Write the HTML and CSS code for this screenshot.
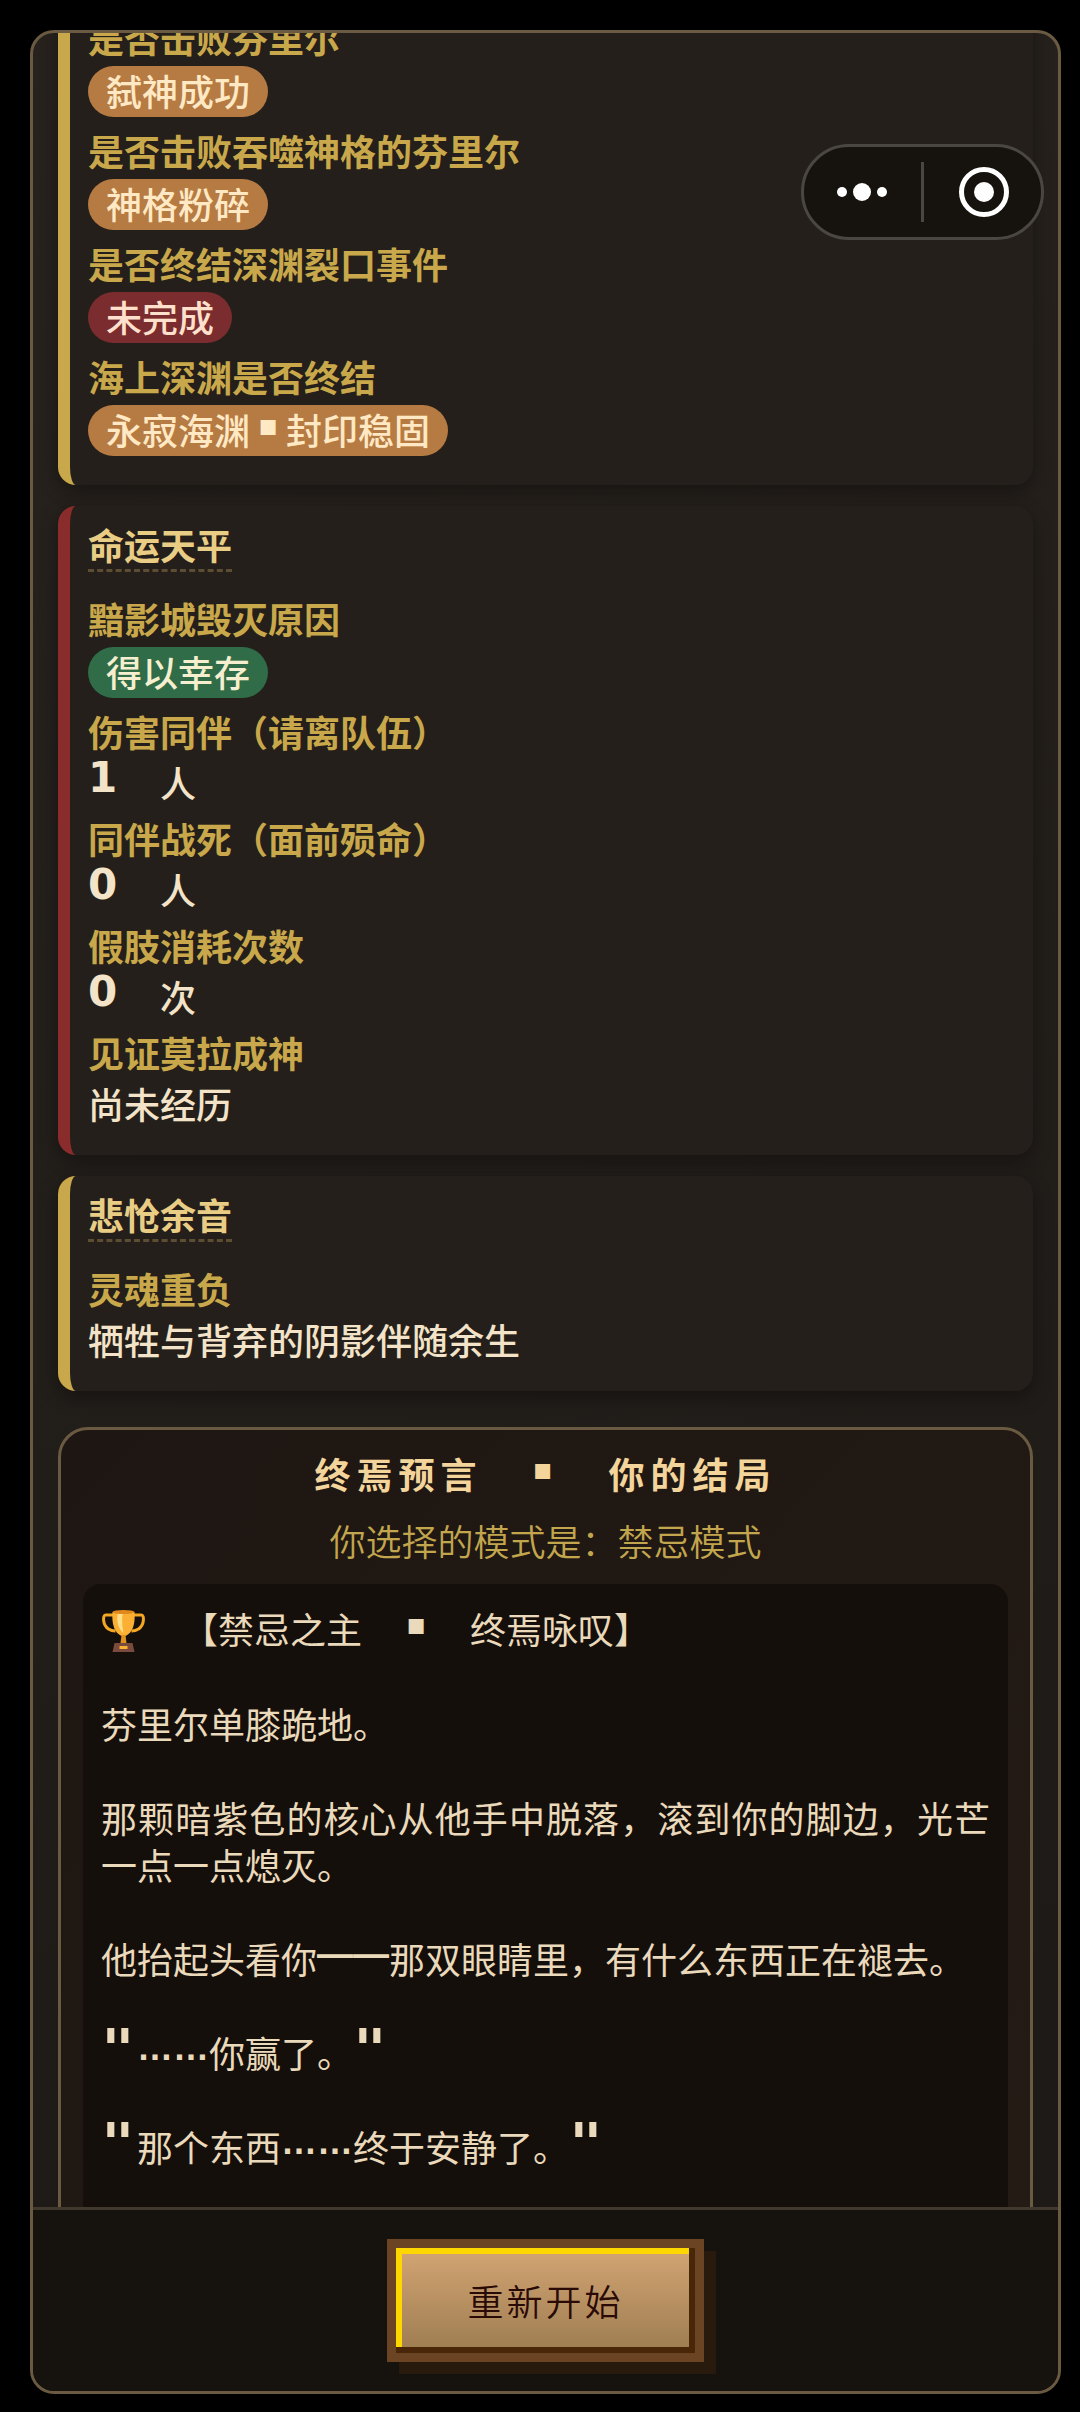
FILE: index.html
```html
<!DOCTYPE html>
<html lang="zh-CN">

<head>
    <meta charset="UTF-8">
    <title>终焉预言</title>
    <meta name="viewport" content="width=device-width, initial-scale=1.0">
    <link rel="stylesheet" href="styles.css">
</head>

<body>
    <div class="modal">
        <div class="modal-body">
            <section class="card card-gold card-scrolled">
                <div class="row">
                    <div class="label">是否击败芬里尔</div>
                    <div class="tag-line"><span class="tag tag-bronze">弑神成功</span></div>
                </div>
                <div class="row">
                    <div class="label">是否击败吞噬神格的芬里尔</div>
                    <div class="tag-line"><span class="tag tag-bronze">神格粉碎</span></div>
                </div>
                <div class="row">
                    <div class="label">是否终结深渊裂口事件</div>
                    <div class="tag-line"><span class="tag tag-red">未完成</span></div>
                </div>
                <div class="row">
                    <div class="label">海上深渊是否终结</div>
                    <div class="tag-line"><span class="tag tag-bronze">永寂海渊<span class="dot">▪</span>封印稳固</span></div>
                </div>
            </section>

            <section class="card card-red">
                <h2 class="card-title">命运天平</h2>
                <div class="row">
                    <div class="label">黯影城毁灭原因</div>
                    <div class="tag-line"><span class="tag tag-green">得以幸存</span></div>
                </div>
                <div class="row">
                    <div class="label">伤害同伴（请离队伍）</div>
                    <div class="value"><span class="num">1</span>　人</div>
                </div>
                <div class="row">
                    <div class="label">同伴战死（面前殒命）</div>
                    <div class="value"><span class="num">0</span>　人</div>
                </div>
                <div class="row">
                    <div class="label">假肢消耗次数</div>
                    <div class="value"><span class="num">0</span>　次</div>
                </div>
                <div class="row">
                    <div class="label">见证莫拉成神</div>
                    <div class="value">尚未经历</div>
                </div>
            </section>

            <section class="card card-gold">
                <h2 class="card-title">悲怆余音</h2>
                <div class="row">
                    <div class="label">灵魂重负</div>
                    <div class="value">牺牲与背弃的阴影伴随余生</div>
                </div>
            </section>

            <section class="ending">
                <h2 class="ending-title">终焉预言　<span class="dot">▪</span>　你的结局</h2>
                <p class="ending-mode">你选择的模式是：禁忌模式</p>
                <div class="story">
                    <p><svg class="trophy" viewBox="0 0 44 44" aria-hidden="true">
                            <path d="M12 6H4c-3 0-3 10 3 14 3 2 5 2 7 2M32 6h8c3 0 3 10-3 14-3 2-5 2-7 2" fill="none" stroke="#f5a623" stroke-width="3" />
                            <path d="M11 3h22c1 12-2 21-9 24h-4C13 24 10 15 11 3z" fill="#fbb034" />
                            <path d="M16 5h5c-1 8 0 14 1 19-5-4-7-11-6-19z" fill="#ffe08a" />
                            <ellipse cx="22" cy="3" rx="11" ry="2" fill="#e08a1e" />
                            <path d="M20 26h4l1 8h-6z" fill="#e0901e" />
                            <path d="M13 34h18l2 9H11z" fill="#7a4a3c" />
                            <path d="M18 37h8v3h-8z" fill="#fbb034" />
                        </svg>　【禁忌之主　<span class="dot">▪</span>　终焉咏叹】</p>
                    <p>芬里尔单膝跪地。</p>
                    <p>那颗暗紫色的核心从他手中脱落，滚到你的脚边，光芒一点一点熄灭。</p>
                    <p>他抬起头看你<span class="dash">——</span>那双眼睛里，有什么东西正在褪去。</p>
                    <p><span class="quote">"</span><span class="ellipsis">……</span>你赢了。<span class="quote">"</span></p>
                    <p><span class="quote">"</span>那个东西<span class="ellipsis">……</span>终于安静了。<span class="quote">"</span></p>
                </div>
            </section>
        </div>

        <div class="modal-footer">
            <button class="restart-button" type="button">重新开始</button>
        </div>
    </div>

    <!-- Mini program capsule -->
    <div class="capsule">
        <button type="button" aria-label="更多">
            <svg width="52" height="52" viewBox="0 0 52 52" fill="#fff">
                <circle cx="5" cy="26" r="5" />
                <circle cx="25" cy="26" r="9" />
                <circle cx="45" cy="26" r="5" />
            </svg>
        </button>
        <span class="capsule-line"></span>
        <button type="button" aria-label="关闭">
            <svg width="52" height="52" viewBox="0 0 52 52" fill="#fff">
                <circle cx="27" cy="26" r="22.5" fill="none" stroke="#fff" stroke-width="5" />
                <circle cx="27" cy="26" r="10" />
            </svg>
        </button>
    </div>
</body>

</html>
```

FILE: styles.css
```css
/* Basic styling */
* {
    box-sizing: border-box;
}

body {
    margin: 0;
    height: 100vh;
    padding: 30px 19px 18px 30px;
    background-color: #000;
    font-family: "Noto Sans CJK SC", sans-serif;
    font-size: 36px;
    color: #f3e3c8;
    text-spacing-trim: space-all;
}

h2,
p {
    margin: 0;
    font-size: 36px;
}

/* Modal */
.modal {
    height: 100%;
    display: flex;
    flex-direction: column;
    overflow: hidden;
    border: 3px solid #6b5a42;
    border-radius: 24px;
    background: linear-gradient(160deg, #27221d, #1c1916);
}

.modal-body {
    flex: 1;
    min-height: 0;
    overflow: hidden;
    padding: 0 25px;
}

/* Cards */
.card {
    margin-bottom: 21px;
    padding: 18px;
    border-left: 12px solid #c8a84b;
    border-radius: 18px;
    background-color: #241f1a;
    box-shadow: 0 6px 18px rgba(0, 0, 0, 0.35);
}

.card-red {
    border-left-color: #8b2c2c;
}

/* First card is partly scrolled out of view */
.card-scrolled {
    margin-top: -36px;
}

.card-title {
    display: table;
    margin-bottom: 24px;
    padding-bottom: 4px;
    line-height: 41px;
    border-bottom: 3px dashed #5c4d33;
    color: #e9cd85;
}

.row {
    margin-bottom: 6px;
}

.label {
    padding-bottom: 6px;
    line-height: 45px;
    font-weight: 600;
    color: #c8a84b;
}

.value {
    padding-bottom: 6px;
    line-height: 44px;
    font-weight: 500;
}

.num {
    display: inline-block;
    width: 36px;
    line-height: 32px;
    vertical-align: 6px;
    font-family: "DejaVu Sans", sans-serif;
    font-size: 42px;
    font-weight: bold;
}

/* Tags */
.tag-line {
    display: flex;
    height: 56px;
}

.tag {
    height: 51px;
    padding: 0 18px;
    line-height: 48px;
    border-radius: 26px;
    font-weight: 500;
    color: #ffe8c4;
}

.tag-bronze {
    background-color: #b57b43;
}

.tag-red {
    background-color: #7a2c2e;
    color: #ffe0cc;
}

.tag-green {
    background-color: #2f6c47;
    color: #f5efcf;
}

.dot {
    display: inline-block;
    width: 36px;
    line-height: 24px;
    vertical-align: 10px;
    text-align: center;
    font-family: "DejaVu Sans", sans-serif;
    font-size: 30px;
    font-weight: bold;
}

/* Ending */
.ending {
    margin-top: 36px;
    padding: 22px;
    border: 3px solid #6b5a42;
    border-radius: 30px;
    background: linear-gradient(135deg, #1e1612, #241b15);
}

.ending-title {
    padding-bottom: 6px;
    line-height: 42px;
    text-align: center;
    letter-spacing: 6px;
    color: #f3d59b;
}

.ending-title .dot {
    width: 42px;
}

.ending-mode {
    margin: 16px 0 20px;
    line-height: 48px;
    text-align: center;
    font-weight: 350;
    color: #c2a64e;
}

.story {
    padding: 21px 18px;
    border-radius: 18px;
    background-color: #140f0b;
    color: #ead9ba;
    line-height: 47px;
    text-align: justify;
}

.story p {
    margin-bottom: 47px;
    font-weight: 400;
}

.trophy {
    width: 45px;
    height: 44px;
    vertical-align: -9px;
}

.dash,
.ellipsis {
    line-height: 24px;
    vertical-align: 8px;
    font-family: "Liberation Sans", sans-serif;
    font-weight: bold;
}

.quote {
    display: inline-block;
    width: 36px;
    line-height: 30px;
    font-family: "DejaVu Sans Mono", monospace;
    font-size: 56px;
    font-weight: bold;
}

/* Footer */
.modal-footer {
    padding: 29px;
    border-top: 3px solid #42392e;
    background-color: #16120e;
    text-align: center;
}

.restart-button {
    display: block;
    margin: 0 auto;
    padding: 27px 71px;
    border: 9px solid #6b4423;
    background: linear-gradient(#d4a574, #9c7c50);
    box-shadow: inset -6px -6px 0 #4a2608, inset 6px 6px 0 #ffd700, 12px 12px 0 #281a0c;
    font-family: "Noto Sans CJK SC", sans-serif;
    font-size: 36px;
    font-weight: 350;
    line-height: 51px;
    letter-spacing: 3px;
    color: #2a0a06;
}

/* Floating capsule */
.capsule {
    position: absolute;
    top: 144px;
    right: 36px;
    display: flex;
    align-items: center;
    width: 243px;
    height: 96px;
    border: 3px solid #4a4742;
    border-radius: 48px;
    background-color: #16120d;
}

.capsule button {
    flex: 1;
    display: flex;
    justify-content: center;
    padding: 0;
    border: none;
    background: none;
}

.capsule-line {
    width: 3px;
    height: 60px;
    background-color: #4a4742;
}
```
